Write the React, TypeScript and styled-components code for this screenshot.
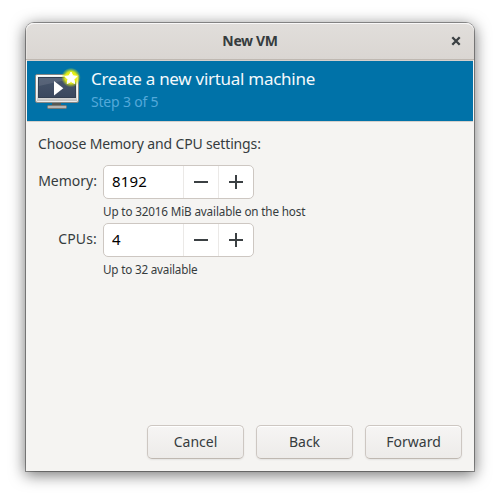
import React from "react";
import styled, { createGlobalStyle } from "styled-components";

const Global = createGlobalStyle`
  * { box-sizing: border-box; }
  body { margin: 0; background: #fff; }
  button, input { font: inherit; letter-spacing: inherit; color: inherit; }
`;

const Desktop = styled.main`
  width: 500px;
  height: 500px;
  padding: 23px 26px 29px;
  overflow: hidden;
  font-family: "Noto Sans", sans-serif;
  font-size: 14px;
  color: #363c3e;
`;

const Window = styled.section`
  height: 448px;
  display: flex;
  flex-direction: column;
  background: #f5f4f2;
  border-radius: 8px 8px 0 0;
  box-shadow: 0 0 0 1px rgba(0, 0, 0, 0.36), 0 3px 15px 1px rgba(0, 0, 0, 0.55);
`;

const TitleBar = styled.header`
  height: 37px;
  flex: none;
  display: grid;
  grid-template-columns: 36px 1fr 36px;
  align-items: center;
  border-radius: 8px 8px 0 0;
  border-bottom: 1px solid #bfb8b1;
  background: linear-gradient(#e1dedb, #dad6d2);
  box-shadow: inset 0 1px #f9f8f8, inset 1px 0 #e6e3e0;
`;

const Title = styled.h1`
  grid-column: 2;
  margin: 0;
  text-align: center;
  font-size: 14px;
  line-height: 20px;
  font-weight: 700;
  letter-spacing: -0.35px;
`;

const CloseButton = styled.button`
  height: 36px;
  padding: 0;
  border: 0;
  background: none;
  display: grid;
  place-items: center;
`;

const Banner = styled.div`
  height: 62px;
  flex: none;
  display: flex;
  margin: 0 1px;
  padding: 6px 7px 0;
  gap: 10px;
  background: #0072a8;
  border-top: 1px solid #d5d0cc;
  border-bottom: 1px solid #d5d0cc;
`;

const BannerText = styled.div`
`;

const Heading = styled.h2`
  margin: 0;
  font-size: 17px;
  line-height: 24px;
  font-weight: 400;
  color: #f4f9fc;
  letter-spacing: -0.28px;
`;

const Step = styled.p`
  margin: 0;
  line-height: 22px;
  color: #53a9da;
  letter-spacing: -0.2px;
`;

const Form = styled.form`
  flex: 1;
  display: flex;
  flex-direction: column;
  padding: 12px 12px 12px;
`;

const Intro = styled.p`
  margin: 0 0 11px;
  line-height: 20px;
  letter-spacing: -0.15px;
`;

const Fields = styled.div`
  display: grid;
  grid-template-columns: 59px 1fr;
  column-gap: 6px;
  grid-auto-rows: 58px;
`;

const Label = styled.label<{ $spacing: number }>`
  text-align: right;
  white-space: nowrap;
  line-height: 32px;
  letter-spacing: ${(p) => p.$spacing}px;
`;

const SpinBox = styled.div`
  width: 151px;
  height: 34px;
  display: grid;
  grid-template-columns: 79px 35px 35px;
  background: #fff;
  border: 1px solid #cdc7c2;
  border-radius: 5px;
  overflow: hidden;
`;

const Entry = styled.input`
  width: 100%;
  min-width: 0;
  padding: 0 0 2px 8px;
  border: 0;
  outline: 0;
  background: none;
  color: #000;
  font-size: 15px;
  letter-spacing: 0.2px;
`;

const SpinButton = styled.button`
  padding: 0;
  border: 0;
  border-left: 1px solid #ebe9e7;
  background: none;
  display: grid;
  place-items: center;
`;

const Hint = styled.p<{ $spacing: number }>`
  margin: 3px 0 0;
  font-size: 11.7px;
  line-height: 18px;
  letter-spacing: ${(p) => p.$spacing}px;
`;

const Actions = styled.footer`
  margin-top: auto;
  display: flex;
  justify-content: flex-end;
  gap: 12px;
`;

const ActionButton = styled.button`
  width: 97px;
  height: 34px;
  padding: 0 0 1px;
  border: 1px solid #cdc7c2;
  border-bottom-color: #bfb8b1;
  border-radius: 5px;
  background: linear-gradient(#f6f5f4, #edebe9);
  box-shadow: inset 0 1px #fff, 0 1px 2px rgba(0, 0, 0, 0.07);
`;

const MachineIcon = () => (
  <svg width="47" height="46" viewBox="0 0 47 46" aria-hidden="true">
    <defs>
      <linearGradient id="frame" x2="0" y2="1">
        <stop stopColor="#f4f4f3" />
        <stop offset=".85" stopColor="#d6d6d5" />
        <stop offset="1" stopColor="#b0b0ae" />
      </linearGradient>
      <linearGradient id="screen" x2="0" y2="1">
        <stop stopColor="#47556c" />
        <stop offset="1" stopColor="#3b485e" />
      </linearGradient>
      <radialGradient id="glow">
        <stop stopColor="#ffff00" />
        <stop offset=".6" stopColor="#eaf011" stopOpacity=".95" />
        <stop offset="1" stopColor="#b9dd22" stopOpacity="0" />
      </radialGradient>
    </defs>
    <path d="M18 36h9v3.5h-9z" fill="#555854" />
    <rect x="13.5" y="38.5" width="19" height="3" rx="1" fill="#b4b4b2" stroke="#777975" />
    <rect x="1.5" y="7.5" width="43" height="28" rx="1.5" fill="url(#frame)" stroke="#858886" />
    <rect x="2.5" y="8.5" width="41" height="26" rx="1" fill="none" stroke="#fff" opacity=".7" />
    <rect x="4.5" y="10.5" width="37" height="20" fill="url(#screen)" stroke="#343f51" />
    <path d="M5 11h36L5 19z" fill="#fff" opacity=".1" />
    <path d="M20 14v14.5l9.3-7.2z" fill="#fff" />
    <circle cx="37" cy="10.5" r="9.8" fill="url(#glow)" />
    <path d="M37 5l1.9 3.8 4.1.6-3 3 .7 4.2-3.7-2-3.8 2 .7-4.2-3-3 4.2-.6z" fill="#fff" stroke="#fff" strokeLinejoin="round" />
  </svg>
);

const Stroke = ({ d, size = 16, width = 2 }: { d: string; size?: number; width?: number }) => (
  <svg width={size} height={size} viewBox={`0 0 ${size} ${size}`} aria-hidden="true">
    <path d={d} stroke="#3b4043" strokeWidth={width} fill="none" />
  </svg>
);

const fields = [
  { id: "memory", label: "Memory:", value: "8192", hint: "Up to 32016 MiB available on the host", labelSpacing: 0, hintSpacing: -0.15 },
  { id: "cpus", label: "CPUs:", value: "4", hint: "Up to 32 available", labelSpacing: 0.15, hintSpacing: -0.2 },
];

const actions = ["Cancel", "Back", "Forward"];

export default function App() {
  return (
    <>
      <Global />
      <Desktop>
        <Window>
          <TitleBar>
            <Title>New VM</Title>
            <CloseButton aria-label="Close">
              <Stroke size={10} width={2.3} d="M1.3 1.3l7.4 7.4M8.7 1.3l-7.4 7.4" />
            </CloseButton>
          </TitleBar>
          <Banner>
            <MachineIcon />
            <BannerText>
              <Heading>Create a new virtual machine</Heading>
              <Step>Step 3 of 5</Step>
            </BannerText>
          </Banner>
          <Form onSubmit={(e) => e.preventDefault()}>
            <Intro>Choose Memory and CPU settings:</Intro>
            <Fields>
              {fields.map((f) => (
                <React.Fragment key={f.id}>
                  <Label htmlFor={f.id} $spacing={f.labelSpacing}>{f.label}</Label>
                  <div>
                    <SpinBox>
                      <Entry id={f.id} defaultValue={f.value} />
                      <SpinButton type="button" aria-label="Decrease">
                        <Stroke d="M1 8h14" />
                      </SpinButton>
                      <SpinButton type="button" aria-label="Increase">
                        <Stroke d="M1 8h14M8 1v14" />
                      </SpinButton>
                    </SpinBox>
                    <Hint $spacing={f.hintSpacing}>{f.hint}</Hint>
                  </div>
                </React.Fragment>
              ))}
            </Fields>
            <Actions>
              {actions.map((text) => (
                <ActionButton key={text} type="button">{text}</ActionButton>
              ))}
            </Actions>
          </Form>
        </Window>
      </Desktop>
    </>
  );
}
